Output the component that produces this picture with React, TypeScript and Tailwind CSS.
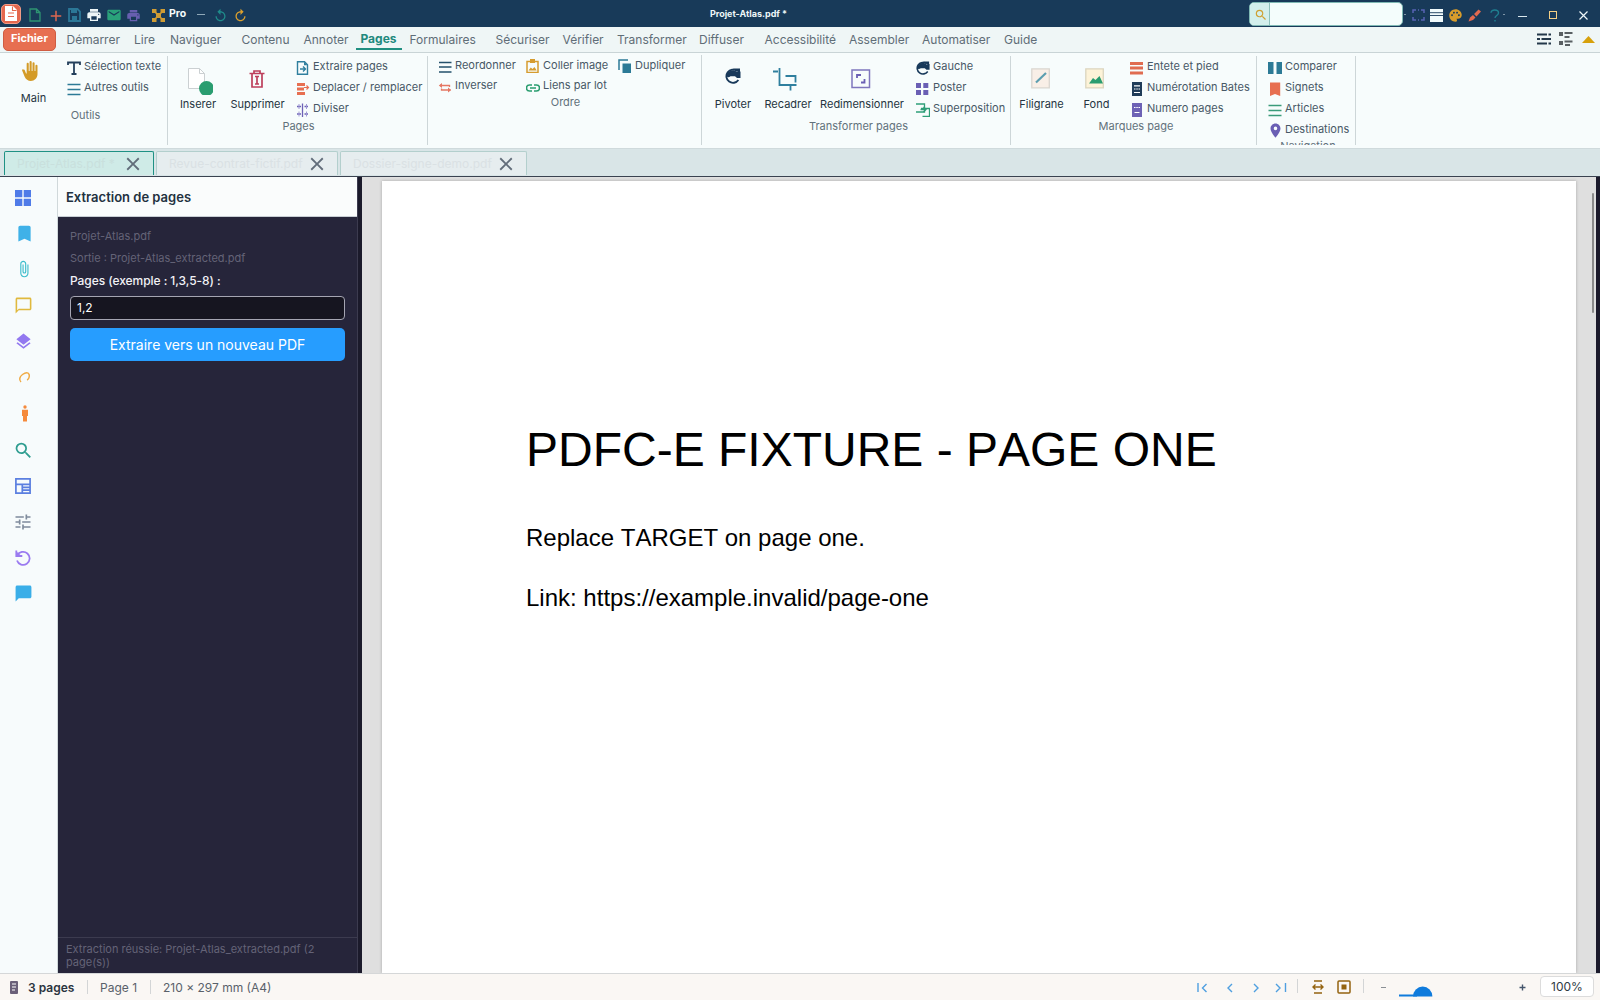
import { ReactNode } from 'react'
import clsx from 'clsx'
import {
  MdAdd, MdAttachFile, MdBackHand, MdBookmark, MdChatBubble, MdChatBubbleOutline, MdClose,
  MdEmail, MdLayers, MdLocationOn, MdPalette, MdPrint, MdReplay, MdSearch, MdTune,
} from 'react-icons/md'

interface RowItem {
  label: string
  icon: ReactNode
}

const MENU = [
  { label: 'Démarrer', cell: 'w-[67.5px]' },
  { label: 'Lire', cell: 'w-[36px]' },
  { label: 'Naviguer', cell: 'w-[71.5px]' },
  { label: 'Contenu', cell: 'w-[62px]' },
  { label: 'Annoter', cell: 'w-[52px]' },
  { label: 'Pages', cell: 'w-[54px]' },
  { label: 'Formulaires', cell: 'w-[86px]' },
  { label: 'Sécuriser', cell: 'w-[67px]' },
  { label: 'Vérifier', cell: 'w-[54.5px]' },
  { label: 'Transformer', cell: 'w-[82px]' },
  { label: 'Diffuser', cell: 'w-[65.5px]' },
  { label: 'Accessibilité', cell: 'w-[84.5px]' },
  { label: 'Assembler', cell: 'w-[73px]' },
  { label: 'Automatiser', cell: 'w-[82px]' },
  { label: 'Guide', cell: 'w-[40px]' },
]

const DOC_TABS = [
  { label: 'Projet-Atlas.pdf *', cell: 'w-[150px] mr-[2px]', active: true },
  { label: 'Revue-contrat-fictif.pdf', cell: 'w-[182px] mr-[2px]', active: false },
  { label: 'Dossier-signe-demo.pdf', cell: 'w-[187px]', active: false },
]

function Glyph({ w = 14, h = 14, children }: { w?: number; h?: number; children: ReactNode }) {
  return (
    <svg width={w} height={h} viewBox={`0 0 ${w} ${h}`} fill="none" className="shrink-0">
      {children}
    </svg>
  )
}

function Lines({ color }: { color: string }) {
  return (
    <Glyph>
      <path d="M0.5 2.5h13M0.5 7.5h13M0.5 12.5h13" stroke={color} strokeWidth="1.4" />
    </Glyph>
  )
}

function RotateGlyph({ size }: { size: number }) {
  return (
    <svg width={size} height={size} viewBox="0 0 16 16" fill="none">
      <path d="M13.4 12A6.6 6.6 0 1 1 12 3" stroke="#18395a" strokeWidth="1.8" />
      <path d="M1.500 8C2 3 8 0.500 12 4l3.500-.5v6.500H12l-2-1.800H5.500C4 9.500 2 9.500 1.500 8z" fill="#18395a" />
      <path d="M8 0.500h7v5z" fill="#18395a" />
    </svg>
  )
}

const toolRows: RowItem[] = [
  {
    label: 'Sélection texte',
    icon: (
      <Glyph>
        <path d="M1 4V1.500h12V4M7 1.500v12M4.500 13h5" stroke="#24405c" strokeWidth="1.8" />
      </Glyph>
    ),
  },
  { label: 'Autres outils', icon: <Lines color="#2c7a96" /> },
]

const pageRows: RowItem[] = [
  {
    label: 'Extraire pages',
    icon: (
      <Glyph>
        <path d="M1.500 0.800h7l3 3v9.400h-10z" stroke="#2f7f9e" strokeWidth="1.4" />
        <path d="M8 0.800v3.500h3.500z" fill="#2f7f9e" />
        <path d="M4 8h5M7 5.500l2.500 2.500L7 10.500" stroke="#2f7f9e" strokeWidth="1.400" />
      </Glyph>
    ),
  },
  {
    label: 'Deplacer / remplacer',
    icon: (
      <Glyph>
        <path d="M1 2.500h8M1 7h7M1 11.500h8" stroke="#e76f51" strokeWidth="2.800" />
        <path d="M8 5.500h4M10.500 3.500l2 2-2 2" stroke="#e76f51" strokeWidth="1.200" />
      </Glyph>
    ),
  },
  {
    label: 'Diviser',
    icon: (
      <Glyph>
        <path d="M6.500 0.500V14" stroke="#6d62b5" strokeWidth="1.300" />
        <path d="M1 3.500h4M8.500 3.500h3.500M1 11h4M8.500 11h3.500" stroke="#6d62b5" strokeWidth="1.300" />
        <path d="M3 1v5M10.500 1v5M3 8.500v5M10.500 8.500v5" stroke="#a19ad6" strokeWidth="1" />
      </Glyph>
    ),
  },
]

const orderColumns: { cell: string; rows: RowItem[] }[] = [
  {
    cell: 'w-[88px]',
    rows: [
      {
        label: 'Reordonner',
        icon: (
          <Glyph>
            <path d="M1 3.500h12.500M1 8h12.500M1 13h12.500" stroke="#24506b" strokeWidth="1.700" />
          </Glyph>
        ),
      },
      {
        label: 'Inverser',
        icon: (
          <Glyph>
            <path d="M2 6.500h9.500V8M12.500 11H3.500V9.500" stroke="#e57763" strokeWidth="1.300" />
            <path d="M4 4L0.800 6.500 4 9zM10 8.500l3.200 2.500-3.200 2.500z" fill="#e57763" />
          </Glyph>
        ),
      },
    ],
  },
  {
    cell: 'w-[92px]',
    rows: [
      {
        label: 'Coller image',
        icon: (
          <Glyph>
            <path d="M1 2.500h11v11H1z" stroke="#d69c2f" strokeWidth="1.500" />
            <path d="M4 0h5v4H4zM2.500 11.500l2.300-3 1.700 1.500 2-2 2.200 3.500z" fill="#d69c2f" />
          </Glyph>
        ),
      },
      {
        label: 'Liens par lot',
        icon: (
          <Glyph>
            <path d="M6 6H3.500a3 3 0 0 0 0 6H6M8 6h2.500a3 3 0 0 1 0 6H8M4 9h6" stroke="#2a9d6f" strokeWidth="1.500" />
          </Glyph>
        ),
      },
    ],
  },
  {
    cell: 'w-[80px]',
    rows: [
      {
        label: 'Dupliquer',
        icon: (
          <Glyph>
            <path d="M1 11V1h9" stroke="#2c7a96" strokeWidth="1.500" />
            <path d="M4.500 4.500H13V14H4.500z" fill="#2c7a96" />
          </Glyph>
        ),
      },
    ],
  },
]

const transformRows: RowItem[] = [
  { label: 'Gauche', icon: <RotateGlyph size={14} /> },
  {
    label: 'Poster',
    icon: (
      <Glyph>
        <path d="M0 1h5v5H0zM7.300 1h5v5h-5zM0 8h5v5H0zM7.300 8h5v5h-5z" fill="#6a5fb4" />
      </Glyph>
    ),
  },
  {
    label: 'Superposition',
    icon: (
      <Glyph>
        <path d="M0 1h8.500v8H0M6.500 13.300h7V5.500H5" stroke="#2f9e78" strokeWidth="1.300" />
        <path d="M4.500 6.500h5M7.500 4l2.500 2.500L7.500 9" stroke="#2f9e78" strokeWidth="1.300" />
      </Glyph>
    ),
  },
]

const markRows: RowItem[] = [
  {
    label: 'Entete et pied',
    icon: (
      <Glyph>
        <path d="M0 2.500h13M0 7h13M0 12h13" stroke="#e06c50" strokeWidth="3" />
      </Glyph>
    ),
  },
  {
    label: 'Numérotation Bates',
    icon: (
      <Glyph>
        <path d="M2 0h10v14H2z" fill="#1f3c58" />
        <path d="M4 3.800h6M4 7h1.500M6.300 7h1.500M8.500 7H10M4 10.500h6" stroke="#fff" strokeWidth="1.200" />
      </Glyph>
    ),
  },
  {
    label: 'Numero pages',
    icon: (
      <Glyph>
        <path d="M2 0h10v14H2z" fill="#6d62b5" />
        <path d="M4 4.500h1.500M6.300 4.500h1.500M8.500 4.500H10M4.500 9.500h5" stroke="#fff" strokeWidth="1.200" />
      </Glyph>
    ),
  },
]

const navRows: RowItem[] = [
  {
    label: 'Comparer',
    icon: (
      <Glyph>
        <path d="M0 1h5.500v12H0zM8.500 1H14v12H8.500z" fill="#2c7a96" />
      </Glyph>
    ),
  },
  {
    label: 'Signets',
    icon: (
      <Glyph>
        <path d="M2 0.500h10.200V14L7 12l-5 2z" fill="#e76f51" />
      </Glyph>
    ),
  },
  { label: 'Articles', icon: <Lines color="#3a9b7a" /> },
  { label: 'Destinations', icon: <MdLocationOn className="size-[17px] shrink-0 text-[#6a5fb4]" /> },
]

const railIcons: ReactNode[] = [
  <Glyph key="thumbs" w={16} h={16}>
    <path d="M0 0h7.300v7.300H0zM8.700 0H16v7.300H8.700zM0 8.700h7.300V16H0zM8.700 8.700H16V16H8.700z" fill="#4f7be8" />
  </Glyph>,
  <MdBookmark key="bookmark" className="size-[21px] text-[#3fb1e8] translate-x-[1px] -translate-y-px" />,
  <MdAttachFile key="attach" className="size-[18px] text-[#3bbccb] translate-x-[1px] -translate-y-px" />,
  <MdChatBubbleOutline key="comment" className="size-[19px] text-[#e0b93e] -translate-y-px" />,
  <MdLayers key="layers" className="size-[19px] text-[#9278f0] -translate-y-px" />,
  <span key="sign" className="translate-x-[1.500px] -translate-y-px">
    <Glyph w={12} h={12}>
      <path d="M2.500 11C0.300 9 1 5.500 4 3.500S10 1 10.700 3.800C11.200 6 10 8.500 8.500 9" stroke="#f0ab45" strokeWidth="1.500" />
    </Glyph>
  </span>,
  <span key="access" className="translate-x-[1.500px] -translate-y-px">
    <Glyph w={7} h={17}>
      <circle cx="3.500" cy="2" r="1.700" fill="#f58a3c" />
      <path d="M0.500 4.800h6v6.200H5.500v5.500h-4V11h-1z" fill="#f58a3c" />
    </Glyph>
  </span>,
  <MdSearch key="search" className="size-[21px] text-[#2f9d90]" />,
  <Glyph key="layout" w={16} h={16}>
    <path d="M0.900 0.900h14.200v14.200H0.900zM1 6.300h14M7.300 6.500V15M8 9.300h7M8 12.200h7" stroke="#5b7fe0" strokeWidth="1.700" />
  </Glyph>,
  <MdTune key="tune" className="size-[20px] text-[#7f8b9c]" />,
  <Glyph key="history" w={16} h={16}>
    <path d="M2.300 5.500A6.500 6.500 0 1 1 2 10.500" stroke="#9b7bf0" strokeWidth="1.800" />
    <path d="M1.300 0.500V6h6" stroke="#9b7bf0" strokeWidth="1.800" />
    <path d="M1 1l6 5.500H1z" fill="#9b7bf0" />
  </Glyph>,
  <MdChatBubble key="chat" className="size-[19px] text-[#3aaee8] -translate-y-px" />,
]

function RibbonRow({ label, icon, h }: RowItem & { h: string }) {
  return (
    <div className={clsx('flex items-center gap-[3px] text-[#475866]', h)}>
      <span className="w-[14px] flex justify-center shrink-0">{icon}</span>
      <span className="whitespace-nowrap -translate-y-px">{label}</span>
    </div>
  )
}

function BigButton({ label, icon, className }: RowItem & { className: string }) {
  return (
    <button className={clsx('flex flex-col items-center shrink-0 text-[#25343f]', className)}>
      <span className="h-6 flex items-center">{icon}</span>
      <span className="mt-[6px] h-[14px] leading-[14px] whitespace-nowrap">{label}</span>
    </button>
  )
}

function Group({ label, className, labelClass, children }: {
  label: string
  className: string
  labelClass?: string
  children: ReactNode
}) {
  return (
    <section className={clsx('shrink-0 overflow-hidden border-r border-[#cdd6d8]', className)}>
      <div className="flex items-start">{children}</div>
      <div className={clsx('h-3 leading-[12px] text-center text-[#62717b]', labelClass)}>{label}</div>
    </section>
  )
}

function TitleBar() {
  return (
    <header className="h-[27px] bg-[#183a59] flex items-center pl-[1px] pr-[12px] shrink-0">
      <div className="flex items-center pt-[3px]">
        <span className="w-5 h-5 -mt-[3px] rounded-[5px] bg-[#e4684e] border border-[#f19a86] flex items-center justify-center">
          <Glyph w={14} h={15}>
            <path d="M1 0h8l4 4v11H1z" fill="#fff" />
            <path d="M4 7h6M4 10.500h6M8.500 0.500v4h4" stroke="#e4684e" strokeWidth="1.100" />
          </Glyph>
        </span>
        <span className="ml-[8px] w-[18px]">
          <Glyph w={12} h={14}>
            <path d="M1 1h6.500L11 4.500V13H1zM7.500 1v3.500H11" stroke="#2e9472" strokeWidth="1.300" />
          </Glyph>
        </span>
        <span className="w-[21px]"><MdAdd className="size-[18px] text-[#dd6750] -translate-y-px translate-y-[1px]" /></span>
        <span className="w-[18px]">
          <Glyph w={13} h={14}>
            <path d="M1 1h8.500L12 3.500V13H1z" stroke="#2b7797" strokeWidth="1.800" />
            <path d="M3 1h6v4H3zM4 8h5v5H4z" fill="#2b7797" />
          </Glyph>
        </span>
        <span className="w-[19px]"><MdPrint className="size-4 text-[#edf6f8]" /></span>
        <span className="w-[20px]"><MdEmail className="size-4 text-[#2aa27a] ml-[0.500px]" /></span>
        <span className="w-[27px]"><MdPrint className="size-[15px] text-[#675fb0] ml-[1px]" /></span>
        <Glyph w={13} h={13}>
          <path d="M0 0h4.500v4H0zM8.500 0H13v4H8.500zM4 4h5v5H4zM0 9h4.500v4H0zM8.500 9H13v4H8.500z" fill="#cf9c35" />
          <path d="M1 1l11 11M12 1L1 12" stroke="#cf9c35" strokeWidth="1.500" />
        </Glyph>
        <span className="ml-[4px] -mt-[2px] w-[28px] text-[10.500px] font-bold text-[#f4fbfd]">Pro</span>
        <span className="w-[8px] h-px bg-[#8fa8b8] -mt-[2px]" />
        <MdReplay className="ml-[8px] size-[15px] text-[#1f8c8b]" />
        <MdReplay className="ml-[5px] size-[15px] text-[#dba02e] -scale-x-100" />
      </div>
      <div className="flex-1 flex justify-center">
        <span className="text-[9px] font-bold text-[#eef6f8]">Projet-Atlas.pdf *</span>
      </div>
      <div className="w-[154px] h-6 rounded-[5px] border border-[#7fb9b4] bg-[#f4fdfc] flex overflow-hidden">
        <span className="w-5 bg-[#d3efec] border-r border-[#8fc1bc] flex items-center justify-center">
          <MdSearch className="size-[14px] text-[#cfa133] translate-x-px translate-y-px" />
        </span>
      </div>
      <div className="flex items-center pt-[3px]">
        <span className="w-[2px] h-px ml-[1px] bg-[#7d94a6] -mt-[2px]" />
        <span className="ml-[6px]">
          <Glyph w={13} h={12}>
            <path d="M1 4V1h3M9 1h3v3M12 8v3H9M4 11H1V8M6 1h1M6 11h1" stroke="#5763b4" strokeWidth="1.500" />
          </Glyph>
        </span>
        <span className="ml-[5px]">
          <Glyph w={13} h={13}>
            <path d="M0 0h13v13H0z" fill="#f0fafb" />
            <path d="M0 3.700h13M0 6.500h13" stroke="#183a59" strokeWidth="0.900" />
          </Glyph>
        </span>
        <MdPalette className="ml-[5px] size-[15px] text-[#d89c2b]" />
        <span className="ml-[5px]">
          <Glyph w={13} h={13}>
            <path d="M0.500 12.500l1.500-4 3-2.500 2.500 2.500-2.500 2.500zM6 5l4.500-4.500 2.500 2L8.500 7.500z" fill="#e2694f" />
          </Glyph>
        </span>
        <span className="ml-[9px]">
          <Glyph w={10} h={13}>
            <path d="M1 3.800C1 0 8.500 0 8.500 4c0 2.500-3.500 2.500-3.500 5M5 11v1.500" stroke="#1f7f90" strokeWidth="1.400" />
          </Glyph>
        </span>
        <span className="ml-[3px] w-[2px] h-px bg-[#7d94a6] -mt-[2px]" />
        <span className="ml-[13px] mt-[3px] w-[9px] h-px bg-[#d9e8ee]" />
        <span className="ml-[22px] size-2 border border-[#f3cf85]" />
        <span className="ml-[22px]">
          <Glyph w={9} h={9}>
            <path d="M0.500 0.500l8 8M8.500 0.500l-8 8" stroke="#eef6f8" strokeWidth="1.200" />
          </Glyph>
        </span>
      </div>
    </header>
  )
}

function MenuBar() {
  return (
    <nav className="h-[26px] shrink-0 bg-[#eff6f6] border-b border-[#c9d4d6] flex items-start text-[12px] text-[#5f6d77]">
      <button className="ml-[3px] mt-px w-[53px] h-[23px] pb-[3px] rounded-[5px] bg-[#e76f51] border border-[#cf5c42] text-white text-[11px] font-bold leading-[18px] text-center">
        Fichier
      </button>
      <div className="flex ml-[10.500px]">
        {MENU.map((item) => (
          <span key={item.label} className={clsx('shrink-0 h-[23px] leading-[25px] whitespace-nowrap', item.cell)}>
            {item.label === 'Pages' ? (
              <span className="block h-[23px] leading-[23px] w-[46px] text-center border-b-2 border-[#1f8f80] text-[#21897d] font-bold">
                {item.label}
              </span>
            ) : item.label}
          </span>
        ))}
      </div>
      <div className="ml-auto flex items-center h-[23px] pt-px pr-[5px]">
        <Glyph w={14} h={12}>
          <path d="M0 1.500h10M11.500 1.500H14M0 6h3M4.500 6H14M0 10.500h10M11.500 10.500H14" stroke="#24384a" strokeWidth="1.800" />
        </Glyph>
        <span className="ml-[8px]">
          <Glyph w={14} h={14}>
            <path d="M0 0h4v4H0zM0 9h4v4H0z" fill="#595f62" />
            <path d="M5.500 1h8M5.500 5h5M5.500 9.500h8M6 13h5" stroke="#595f62" strokeWidth="1.800" />
          </Glyph>
        </span>
        <span className="ml-[9px]">
          <Glyph w={13} h={7}>
            <path d="M0 7L6.500 0 13 7z" fill="#d7a10b" />
          </Glyph>
        </span>
      </div>
    </nav>
  )
}

function Ribbon() {
  return (
    <div className="h-[96px] shrink-0 bg-[#f7fcfc] border-b border-[#cfdadc] pt-[3px] flex text-[11px]">
      <Group label="Outils" className="h-[89px] w-[168px]" labelClass="pl-[4px] -mt-[10px]">
        <BigButton
          label="Main"
          className="w-[67px] pt-[3px] h-[63px] [&>span:last-child]:mt-[8px]"
          icon={<MdBackHand className="size-5 text-[#d49b28] -translate-x-[4px]" />}
        />
        <div className="pt-px">{toolRows.map((r) => <RibbonRow key={r.label} {...r} h="h-[21px]" />)}</div>
      </Group>

      <Group label="Pages" className="h-[89px] w-[260px]" labelClass="pl-[2px]">
        <BigButton
          label="Inserer"
          className="w-[60px] pt-[11px]"
          icon={
            <Glyph w={30} h={32}>
              <path d="M5.500 5.500h11l5 5v15h-16z" fill="#fff" stroke="#cbd0d2" />
              <path d="M16.500 5.500v5h5" stroke="#cbd0d2" />
              <circle cx="23.500" cy="25.500" r="7.500" fill="#2a9d70" />
            </Glyph>
          }
        />
        <BigButton
          label="Supprimer"
          className="w-[59px] pt-[11px]"
          icon={
            <span className="-translate-x-px">
              <Glyph w={16} h={18}>
                <path d="M0.500 3.500h15M5 3V1h6v2M3 4v13h10V4" stroke="#bd3f5b" strokeWidth="1.700" />
                <path d="M6 6.500h4M6 14h4M8 6.500V14" stroke="#bd3f5b" strokeWidth="1.700" />
              </Glyph>
            </span>
          }
        />
        <div className="pt-px ml-[9px]">{pageRows.map((r) => <RibbonRow key={r.label} {...r} h="h-[21px]" />)}</div>
      </Group>

      <Group label="Ordre" className="w-[274px] -mt-px h-[90px]" labelClass="pl-[2px]">
        <div className="flex pl-[10px]">
          {orderColumns.map((col) => (
            <div key={col.cell} className={clsx('pt-px h-[41px]', col.cell)}>
              {col.rows.map((r) => <RibbonRow key={r.label} {...r} h="h-[20px]" />)}
            </div>
          ))}
        </div>
      </Group>

      <Group label="Transformer pages" className="h-[89px] w-[309px]" labelClass="pl-[5px]">
        <BigButton label="Pivoter" className="w-[62px] pt-[11px]" icon={<span className="-translate-y-[3px]"><RotateGlyph size={16} /></span>} />
        <BigButton
          label="Recadrer"
          className="w-[48px] pt-[11px]"
          icon={
            <span className="-translate-x-[3px]">
              <Glyph w={24} h={24}>
                <path d="M0 4.500h5M6.500 1v17h17M12.500 9h10v6.500M17.500 18v5.500" stroke="#2f7f9e" strokeWidth="1.800" />
              </Glyph>
            </span>
          }
        />
        <BigButton
          label="Redimensionner"
          className="w-[100px] pt-[11px]"
          icon={
            <span className="-translate-x-px">
              <Glyph w={20} h={20}>
                <path d="M1 1h17.500v17.500H1z" stroke="#7f76bd" strokeWidth="1.500" />
                <path d="M6 9V6h4M13.500 10v3.500H10" stroke="#6a5fb4" strokeWidth="1.800" />
              </Glyph>
            </span>
          }
        />
        <div className="pt-px ml-[4px]">{transformRows.map((r) => <RibbonRow key={r.label} {...r} h="h-[21px]" />)}</div>
      </Group>

      <Group label="Marques page" className="h-[89px] w-[246px]" labelClass="pl-[5px]">
        <BigButton
          label="Filigrane"
          className="w-[61px] pt-[11px]"
          icon={
            <span className="-translate-x-px -translate-y-px">
              <Glyph w={20} h={21}>
                <path d="M0.800 0.800h17.500v19H0.800z" fill="#f9efe7" stroke="#dad6d0" strokeWidth="1.300" />
                <path d="M5 14.500l10-9.500" stroke="#5c9eb0" strokeWidth="2.200" />
              </Glyph>
            </span>
          }
        />
        <BigButton
          label="Fond"
          className="w-[49px] pt-[11px]"
          icon={
            <span className="-translate-x-[2px] -translate-y-px">
              <Glyph w={20} h={21}>
                <path d="M0.800 0.800h17.500v19H0.800z" fill="#fdf3d8" stroke="#dbd5bf" strokeWidth="1.300" />
                <path d="M4 15.500l4-5.500 2.500 2 4-4L18 15.500z" fill="#2a9d70" />
              </Glyph>
            </span>
          }
        />
        <div className="pt-px ml-[9px]">{markRows.map((r) => <RibbonRow key={r.label} {...r} h="h-[21px]" />)}</div>
      </Group>

      <Group label="Navigation" className="h-[89px] w-[99px]" labelClass="pl-[4px] -mt-px">
        <div className="pt-px ml-[11px]">{navRows.map((r) => <RibbonRow key={r.label} {...r} h="h-[21px]" />)}</div>
      </Group>
    </div>
  )
}

function DocTabs() {
  return (
    <div className="h-7 shrink-0 bg-[#d9e5e7] border-b border-[#3a4250] pt-[2px] pl-[4px] flex">
      {DOC_TABS.map((tab) => (
        <div
          key={tab.label}
          className={clsx(
            'h-6 flex items-center justify-between border border-b-0 rounded-t-[2px] pl-[12px] pr-[11px]',
            tab.active ? 'bg-[#cfebe7] border-[#1f9184]' : 'bg-[#e6edef] border-[#b3cfcd]',
            tab.cell
          )}
        >
          <span className={clsx('text-[12px] whitespace-nowrap', tab.active ? 'text-[#c9e0dd]' : 'text-[#dae1e4]')}>
            {tab.label}
          </span>
          <MdClose className="size-[22px] -mr-[2px] shrink-0 text-[#626d7a]" />
        </div>
      ))}
    </div>
  )
}

function ExtractPanel() {
  return (
    <aside className="w-[300px] shrink-0 bg-[#26253a] border-r border-[#3c3b4f] flex flex-col">
      <h2 className="h-10 pt-[2px] bg-[#fafcfc] border-b border-[#c8ced4] pl-2 flex items-center text-[13px] font-semibold text-[#22313f]">
        Extraction de pages
      </h2>
      <div className="px-3 pt-3 text-[11px] text-[#646377]">
        <div className="h-[14px] leading-[14px]">Projet-Atlas.pdf</div>
        <div className="mt-2 h-[14px] leading-[14px]">Sortie : Projet-Atlas_extracted.pdf</div>
        <div className="mt-2 h-4 leading-[16px] text-[12px] font-medium text-[#f2f2f6] tracking-[-0.06px]">Pages (exemple : 1,3,5-8) :</div>
        <div className="mt-[7px] h-6 rounded-[4px] border border-[#a5a5b2] bg-[#161520] px-[6px] leading-[22px] text-[12px] text-white">
          1,2
        </div>
        <button className="mt-2 w-full h-[33px] rounded-[5px] bg-[#269dff] text-white text-[14px]">
          Extraire vers un nouveau PDF
        </button>
      </div>
      <div className="mt-auto h-9 border-t border-[#3c3b4f] pl-2 pr-6 pt-[5px] text-[11px] leading-[13px] text-[#646377]">
        Extraction réussie: Projet-Atlas_extracted.pdf (2 page(s))
      </div>
    </aside>
  )
}

function StatusBar() {
  return (
    <footer className="h-[27px] shrink-0 bg-[#faf7f4] border-t border-[#d5d7d8] flex items-center pt-px pl-[10px] pr-[6px] text-[12px] text-[#59616a]">
      <Glyph w={8} h={13}>
        <rect width="8" height="13" rx="1" fill="#6a6079" />
        <path d="M2 3h4M2 6h4M2 9h3" stroke="#fff" strokeWidth="1.100" />
      </Glyph>
      <span className="ml-[10px] w-[59px] font-semibold text-[#2b3440]">3 pages</span>
      <span className="w-px h-[14px] bg-[#d3d5d6] -mt-[2px]" />
      <span className="ml-[12px] w-[50px]">Page 1</span>
      <span className="w-px h-[14px] bg-[#d3d5d6] -mt-[2px]" />
      <span className="ml-[12px]">210 × 297 mm (A4)</span>

      <div className="ml-auto flex items-center">
        <Glyph w={90} h={11}>
          <path
            d="M1 1v9M9.500 2L5.500 6l4 4M35 2l-4 4 4 4M57 2l4 4-4 4M79 2l4 4-4 4M88.500 1v9"
            stroke="#4f9fe0"
            strokeWidth="1.400"
          />
        </Glyph>
        <span className="ml-[10px] w-px h-[14px] bg-[#d3d5d6] -mt-[3px]" />
        <span className="ml-[14px] -mt-px">
          <Glyph w={12} h={14}>
            <path d="M2 1h8M2 13h8M1.500 7h9M3.500 4.500L1 7l2.500 2.500M8.500 4.500L11 7 8.500 9.500" stroke="#94630f" strokeWidth="1.400" />
          </Glyph>
        </span>
        <span className="ml-[13px] -mt-px">
          <Glyph w={14} h={14}>
            <rect x="1" y="1" width="12" height="12" rx="1" stroke="#94630f" strokeWidth="1.500" />
            <rect x="4.500" y="4.500" width="5" height="5" fill="#94630f" />
          </Glyph>
        </span>
        <span className="ml-[12px] w-px h-[14px] bg-[#d3d5d6] -mt-[3px]" />
        <span className="ml-[17px] w-[5px] h-px bg-[#8a8f94]" />
        <span className="ml-[13px] mt-[7px]">
          <Glyph w={120} h={12}>
            <path d="M0 9.500h18v2H0z" fill="#0f7bdc" />
            <path d="M14 11.500a9.700 10 0 0 1 19.400 0z" fill="#0f7bdc" />
          </Glyph>
        </span>
        <Glyph w={7} h={7}>
          <path d="M3.500 0.500v6M0.500 3.500h6" stroke="#45566c" strokeWidth="1.400" />
        </Glyph>
        <span className="ml-[14px] -mt-[2px] w-[54px] h-[21px] rounded-[4px] border border-[#dcdcdc] bg-white leading-[19px] text-center text-[#2f3a44]">
          100%
        </span>
      </div>
    </footer>
  )
}

export default function App() {
  return (
    <div className="w-[1600px] h-[1000px] overflow-hidden flex flex-col bg-[#f7fbfc] font-['Inter',sans-serif]">
      <TitleBar />
      <MenuBar />
      <Ribbon />
      <DocTabs />
      <main className="flex-1 min-h-0 flex">
        <div className="w-[58px] shrink-0 border-r border-[#d0d8da] pt-[3px] flex flex-col items-center pr-[11px]">
          {railIcons.map((icon, i) => (
            <span key={i} className="h-9 shrink-0 flex items-center">{icon}</span>
          ))}
        </div>
        <ExtractPanel />
        <div className="w-1 shrink-0 bg-[#1b1a2b]" />
        <div className="flex-1 min-w-0 bg-[#dfdfdf] pt-1 pl-5 flex">
          <article className="w-[1194px] shrink-0 bg-white shadow-[0_0_3px_rgba(0,0,0,0.25)] pl-[144px] pt-[241px] text-black font-['Liberation_Sans',sans-serif] [font-kerning:none]">
            <h1 className="text-[48px] leading-[56px] whitespace-nowrap">PDFC-E FIXTURE - PAGE ONE</h1>
            <p className="mt-[46px] text-[24px] leading-[28px]">Replace TARGET on page one.</p>
            <p className="mt-[32px] text-[24px] leading-[28px]">Link: https://example.invalid/page-one</p>
          </article>
          <div className="ml-[16px] mt-3 w-[2px] h-[120px] rounded-full bg-[#8b8b8b]" />
        </div>
        <div className="w-1 shrink-0 bg-[#1b1a2b]" />
      </main>
      <StatusBar />
    </div>
  )
}
